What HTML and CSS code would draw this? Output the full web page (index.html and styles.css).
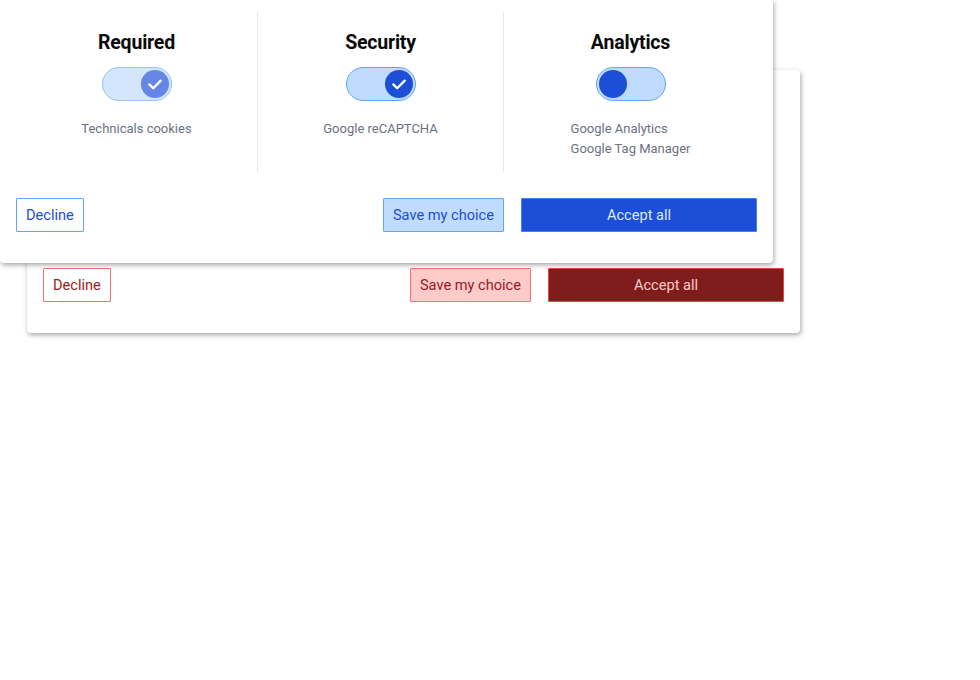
FILE: index.html
```html
<!DOCTYPE html>
<html lang="en">
<head>
<meta charset="utf-8">
<title>Cookie consent</title>
<link rel="stylesheet" href="styles.css">
</head>
<body>
<div class="stage">
  <section class="card card-red">
    <div class="cols cols-hidden" aria-hidden="true">
      <div class="col">
        <h2 class="col-title">Required</h2>
        <span class="toggle toggle-on toggle-disabled"><span class="knob"></span></span>
        <ul class="col-list"><li>Technicals cookies</li></ul>
      </div>
      <div class="col">
        <h2 class="col-title">Security</h2>
        <span class="toggle toggle-on"><span class="knob"></span></span>
        <ul class="col-list"><li>Google reCAPTCHA</li></ul>
      </div>
      <div class="col">
        <h2 class="col-title">Analytics</h2>
        <span class="toggle"><span class="knob"></span></span>
        <ul class="col-list"><li>Google Analytics</li><li>Google Tag Manager</li></ul>
      </div>
    </div>
    <div class="actions">
      <button class="btn btn-decline">Decline</button>
      <span class="spacer"></span>
      <button class="btn btn-save">Save my choice</button>
      <button class="btn btn-accept">Accept all</button>
    </div>
  </section>

  <section class="card card-blue">
    <div class="cols">
      <div class="col">
        <h2 class="col-title">Required</h2>
        <span class="toggle toggle-on toggle-disabled"><span class="knob"><svg viewBox="0 0 28 28" width="28" height="28"><path d="M8.3 14.4l3.9 3.9 7.5-7.7" fill="none" stroke="#fff" stroke-width="2.3" stroke-linecap="round" stroke-linejoin="round"/></svg></span></span>
        <ul class="col-list"><li>Technicals cookies</li></ul>
      </div>
      <div class="col">
        <h2 class="col-title">Security</h2>
        <span class="toggle toggle-on"><span class="knob"><svg viewBox="0 0 28 28" width="28" height="28"><path d="M8.3 14.4l3.9 3.9 7.5-7.7" fill="none" stroke="#fff" stroke-width="2.3" stroke-linecap="round" stroke-linejoin="round"/></svg></span></span>
        <ul class="col-list"><li>Google reCAPTCHA</li></ul>
      </div>
      <div class="col">
        <h2 class="col-title">Analytics</h2>
        <span class="toggle"><span class="knob"></span></span>
        <ul class="col-list"><li>Google Analytics</li><li>Google Tag Manager</li></ul>
      </div>
    </div>
    <div class="actions">
      <button class="btn btn-decline">Decline</button>
      <span class="spacer"></span>
      <button class="btn btn-save">Save my choice</button>
      <button class="btn btn-accept">Accept all</button>
    </div>
  </section>
</div>
</body>
</html>
```

FILE: styles.css
```css
* { box-sizing: border-box; }
html, body { margin: 0; padding: 0; background: #fff; }
body { font-family: Roboto, "Liberation Sans", Arial, sans-serif; overflow: hidden; }

.stage {
  position: relative;
  width: 980px;
  height: 680px;
  padding: 70px 0 0 27px;
}

.card {
  width: 773px;
  height: 263px;
  background: #fff;
  border-radius: 0 0 4px 4px;
  box-shadow: 1px 2px 5px rgba(0, 0, 0, 0.35);
  padding: 12px 16px 31px;
  display: flex;
  flex-direction: column;
}
.card-red { border-radius: 4px; }
.card-blue { position: absolute; top: 0; left: 0; }

.cols {
  display: grid;
  grid-template-columns: 241px 246px 254px;
  height: 161px;
}
.cols-hidden { visibility: hidden; }
.col {
  display: flex;
  flex-direction: column;
  align-items: center;
  padding-top: 19px;
}
.col + .col { border-left: 1px solid #e5e7eb; }

.col-title {
  margin: 0;
  font-size: 19.5px;
  line-height: 24px;
  font-weight: 700;
  color: #0b0b0b;
  letter-spacing: -0.2px;
}

.toggle {
  margin-top: 12px;
  width: 70px;
  height: 34px;
  border-radius: 17px;
  background: #bfdbfe;
  border: 1.5px solid #60a5fa;
  display: flex;
  align-items: center;
  padding: 0 2px;
}
.toggle-on { justify-content: flex-end; }
.toggle-disabled { opacity: 0.68; }
.knob {
  width: 28px;
  height: 28px;
  border-radius: 50%;
  background: #1d4ed8;
  display: block;
}
.knob svg { display: block; }

.col-list {
  list-style: none;
  margin: 18px 0 0;
  padding: 0;
  font-size: 13px;
  line-height: 20px;
  color: #6b7280;
  text-align: left;
}

.actions {
  margin-top: 26px;
  display: flex;
  align-items: center;
  gap: 17px;
}
.spacer { flex: 1; }
.btn {
  height: 34px;
  padding: 0 9px;
  font-family: inherit;
  font-size: 14.6px;
  border: 1px solid;
  border-radius: 1px;
  background: #fff;
  cursor: pointer;
}
.btn-accept { width: 236px; }

.card-blue .btn-decline { border-color: #60a5fa; color: #1d4ed8; }
.card-blue .btn-save { background: #bfdbfe; border-color: #60a5fa; color: #1d4ed8; }
.card-blue .btn-accept { background: #1d4ed8; border-color: #3b82f6; color: #dbeafe; }

.card-red .btn-decline { border-color: #f87171; color: #991b1b; }
.card-red .btn-save { background: #fecaca; border-color: #f87171; color: #991b1b; }
.card-red .btn-accept { background: #7f1d1d; border-color: #ef4444; color: #fecaca; }
```
